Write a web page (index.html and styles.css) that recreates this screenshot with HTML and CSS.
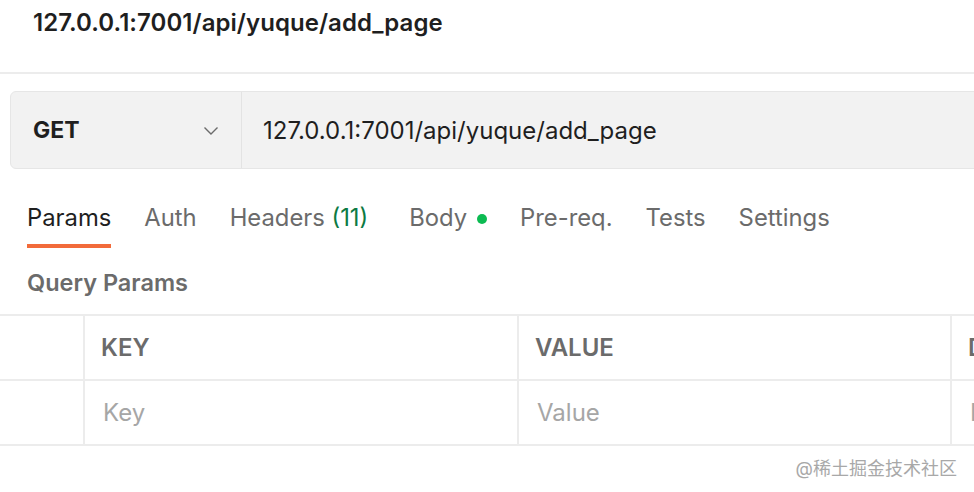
FILE: index.html
```html
<!DOCTYPE html>
<html>
<head>
<meta charset="utf-8">
<link rel="stylesheet" href="styles.css">
</head>
<body>
<div class="page">
  <header class="title-bar">
    <h1 class="title">127.0.0.1:7001/api/yuque/add_page</h1>
  </header>
  <div class="request">
    <div class="req-bar">
      <div class="method">
        <span class="method-name">GET</span>
        <svg class="chev" width="16" height="10" viewBox="0 0 16 10"><path d="M1.5 1.5 L8 8 L14.5 1.5" fill="none" stroke="#6b6b6b" stroke-width="1.4"/></svg>
      </div>
      <div class="url">127.0.0.1:7001/api/yuque/add_page</div>
    </div>
  </div>
  <nav class="tabs">
    <div class="tab active">Params</div>
    <div class="tab">Auth</div>
    <div class="tab">Headers <span class="count">(11)</span></div>
    <div class="tab body-tab">Body<span class="dot"></span></div>
    <div class="tab">Pre-req.</div>
    <div class="tab">Tests</div>
    <div class="tab">Settings</div>
  </nav>
  <div class="section-label">Query Params</div>
  <div class="table">
    <div class="row head">
      <div class="cell chk"></div>
      <div class="cell key">KEY</div>
      <div class="cell val">VALUE</div>
      <div class="cell desc">DESCRIPTION</div>
    </div>
    <div class="row body">
      <div class="cell chk"></div>
      <div class="cell key ph">Key</div>
      <div class="cell val ph">Value</div>
      <div class="cell desc ph">Description</div>
    </div>
  </div>
  <div class="watermark">@稀土掘金技术社区</div>
</div>
</body>
</html>
```
FILE: styles.css
```css
* { box-sizing: border-box; }
html, body { margin: 0; padding: 0; background: #fff; }
body {
  font-family: Inter, "Noto Sans", "Noto Sans CJK SC", sans-serif;
  width: 974px;
  height: 492px;
  overflow: hidden;
}
.page { width: 974px; }
.title-bar {
  height: 74px;
  border-bottom: 2px solid #ececec;
  padding: 8px 0 0 33px;
}
.title {
  margin: 0;
  font-size: 24px;
  font-weight: 600;
  color: #1f1f1f;
  line-height: 30px;
  letter-spacing: 0.05px;
}
.request { padding: 17px 0 0 10px; }
.req-bar {
  display: flex;
  height: 78px;
  width: 990px;
  background: #f2f2f2;
  border: 1.5px solid #e6e6e6;
  border-radius: 6px;
}
.method {
  width: 231px;
  flex: none;
  display: flex;
  align-items: center;
  justify-content: space-between;
  padding: 0 22px 0 22px;
  border-right: 1.5px solid #e3e3e3;
}
.method-name {
  font-size: 23px;
  font-weight: 700;
  color: #1f1f1f;
}
.chev { margin-top: 2px; }
.url {
  display: flex;
  align-items: center;
  padding-left: 21px;
  font-size: 24px;
  color: #1f1f1f;
}
.tabs {
  display: flex;
  align-items: flex-start;
  gap: 33px;
  padding: 34px 0 0 27px;
}
.tab {
  font-size: 23.8px;
  color: #6b6b6b;
  line-height: 30px;
  padding-bottom: 15px;
  display: flex;
  align-items: flex-start;
  white-space: pre;
}
.tab.active {
  color: #1f1f1f;
  padding-bottom: 11px;
  border-bottom: 4px solid #f26b3a;
}
.count { color: #0c7a43; }
.dot {
  width: 10px;
  height: 10px;
  border-radius: 50%;
  background: #0cbb52;
  margin: 11px 0 0 10px;
}
.body-tab { margin-left: 8px; }
.section-label {
  padding-left: 27px;
  font-size: 23.5px;
  font-weight: 600;
  color: #6b6b6b;
  line-height: 30px;
  margin-top: 20px;
}
.table {
  margin-top: 16px;
  border-top: 2px solid #ececec;
}
.row {
  display: grid;
  grid-template-columns: 83px 434px 433px 1fr;
  height: 65px;
  border-bottom: 2px solid #ececec;
}
.cell {
  display: flex;
  align-items: center;
  padding-left: 16px;
  font-size: 24px;
  border-left: 2px solid #ececec;
  white-space: nowrap;
  overflow: hidden;
}
.cell.chk { border-left: none; }
.head .cell { font-weight: 600; color: #6b6b6b; }
.ph { color: #a6a6a6; padding-left: 18px; }
.watermark {
  text-align: right;
  padding-right: 17px;
  font-size: 18px;
  color: #a8a8a8;
  margin-top: 8px;
}
```
